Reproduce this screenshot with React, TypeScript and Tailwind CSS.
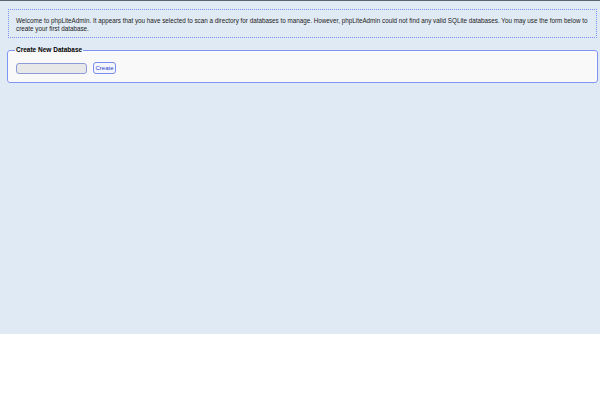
import React from "react";

export default function App() {
  return (
    <div className="min-h-[400px] w-[600px] bg-white" style={{ fontFamily: '"Liberation Sans", Arial, sans-serif' }}>
      <div className="h-[334px] bg-[#e0eaf4] border-t border-[#5d6373] pt-[8px]">
        <div className="ml-[8px] w-[589px] h-[29px] border border-dotted border-[#7a90f2] pl-[7px] pr-[3px] pt-[7px] text-[6.3px] leading-[7.5px] text-[#1a1a1a]">
          Welcome to phpLiteAdmin. It appears that you have selected to scan a directory for databases to manage. However, phpLiteAdmin could not find any valid SQLite databases. You may use the form below to create your first database.
        </div>
        <fieldset className="ml-[7px] mt-[8px] w-[591px] h-[37px] border border-[#7f95f5] rounded-[3px] bg-[#f9f9f9] px-[7px]">
          <legend className="px-[1px] text-[6.5px] font-bold leading-[8px] text-black">Create New Database</legend>
          <div className="flex items-center gap-[6px] pl-[1px] pt-[8px]">
            <div className="w-[71px] h-[11px] rounded-[3px] border border-[#8d9ad8] bg-[#e8e8e8]" />
            <div className="h-[12px] w-[23px] rounded-[3px] border border-[#7a8ef0] bg-[#f4f6fc] flex items-center justify-center text-[6px] text-[#2a3fd0]">
              Create
            </div>
          </div>
        </fieldset>
      </div>
    </div>
  );
}
